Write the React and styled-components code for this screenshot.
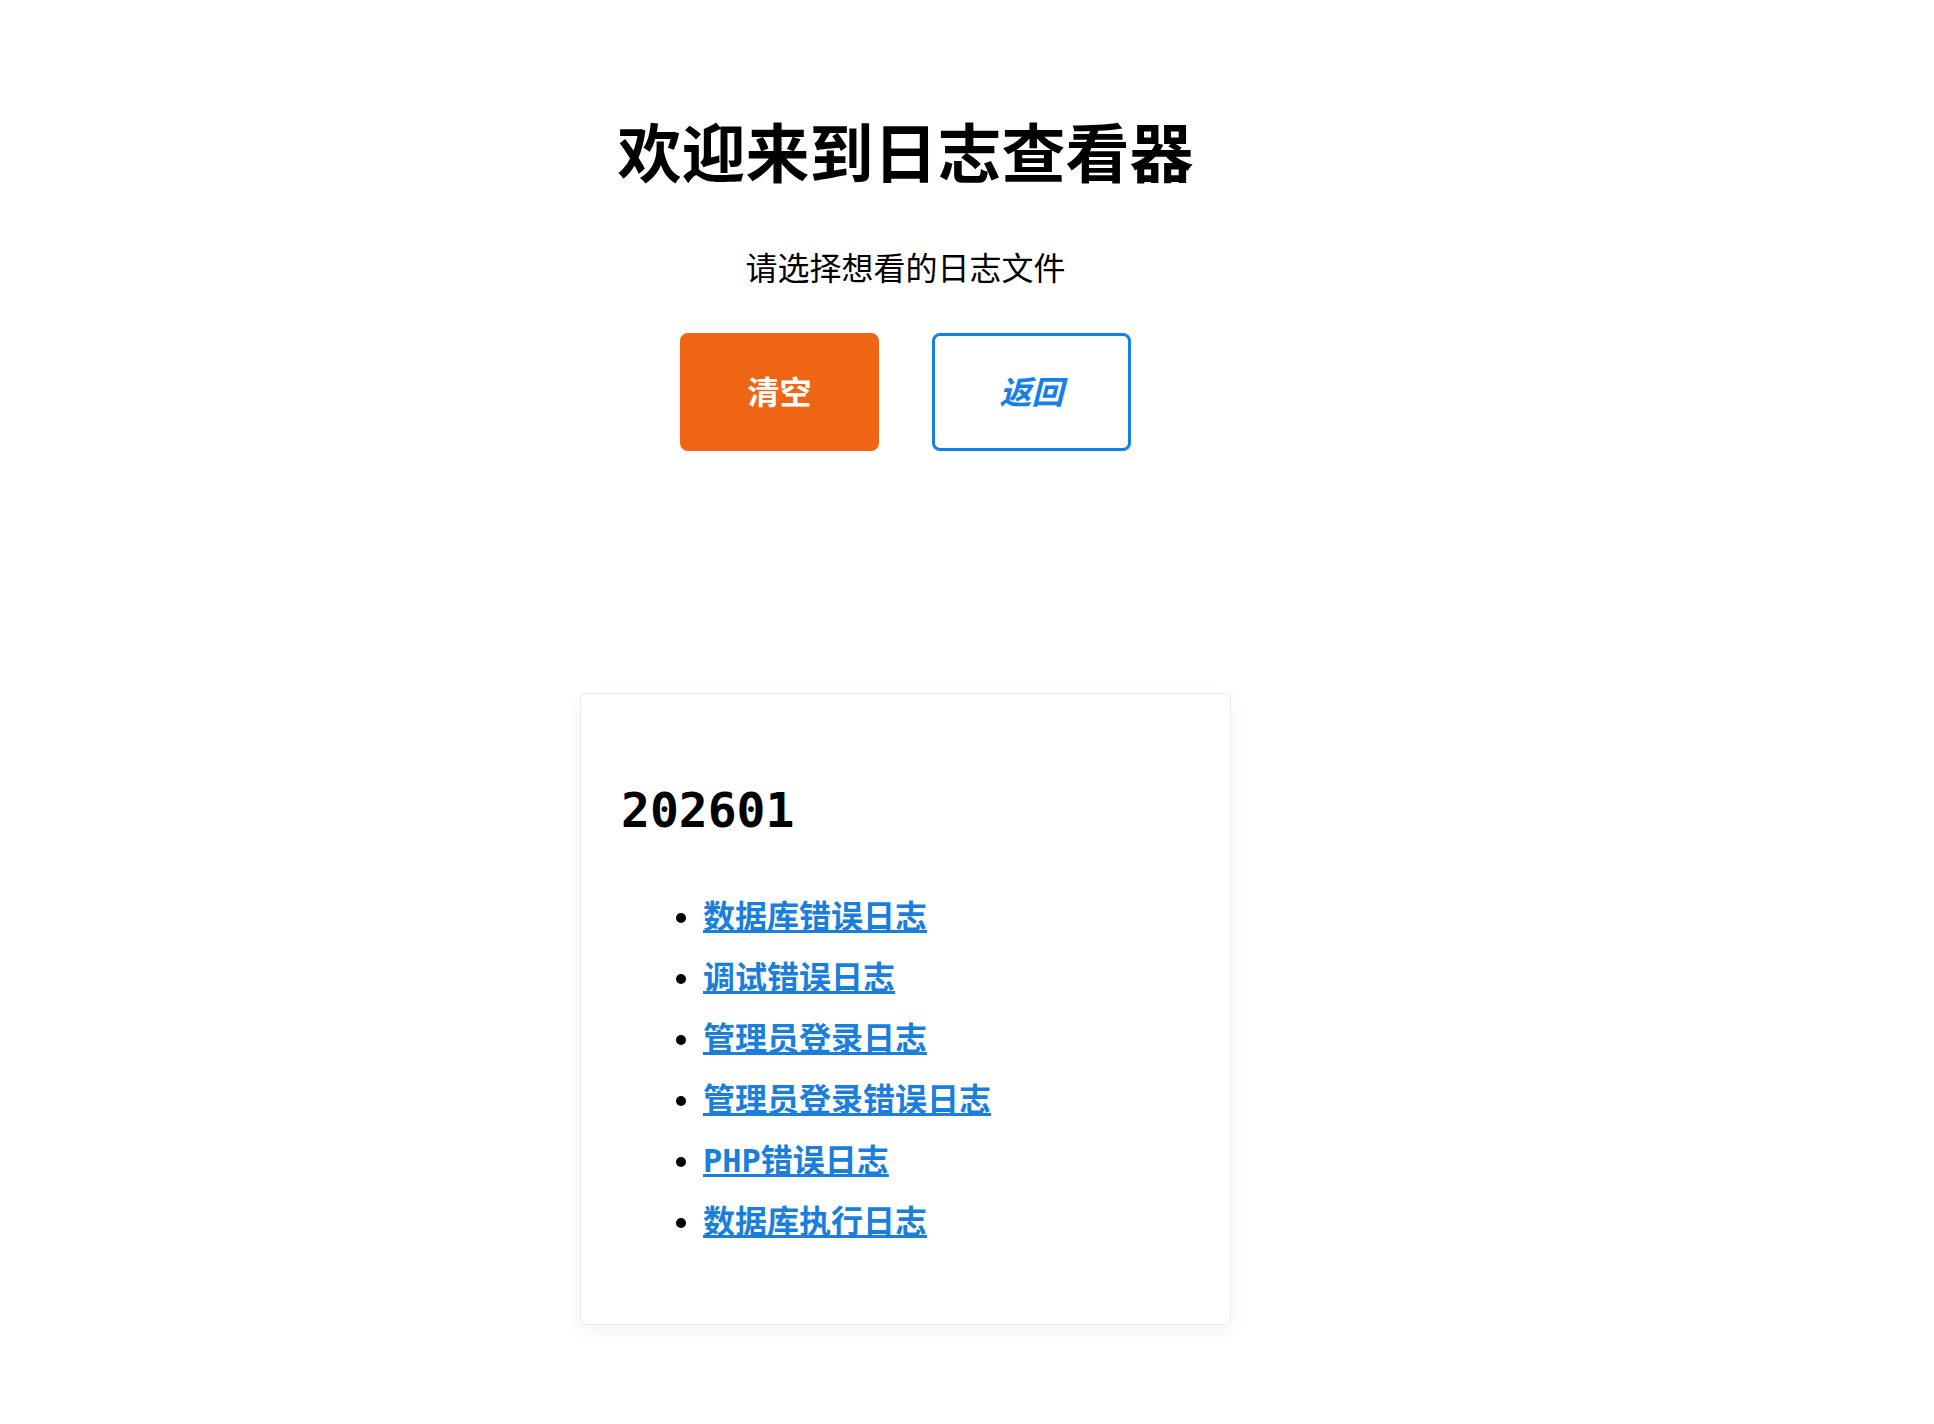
import React from 'react';
import styled, { createGlobalStyle } from 'styled-components';

const GlobalStyle = createGlobalStyle`
    body {
        margin: 0;
        background: #ffffff;
        color: #000000;
        font-family: "Noto Sans", "Noto Sans CJK SC", sans-serif;
    }
`

const Page = styled.div`
    width: 1811px;
    display: flex;
    flex-direction: column;
    align-items: center;
    padding-top: 109px;
    padding-bottom: 100px;
`
const Title = styled.h1`
    margin: 0;
    font-size: 64px;
    line-height: 80px;
    font-weight: 700;
    font-family: "Noto Sans CJK SC", sans-serif;
`
const Subtitle = styled.p`
    margin: 53px 0 0;
    font-size: 32px;
    line-height: 48px;
    font-family: "Noto Sans CJK SC", sans-serif;
`
const Actions = styled.div`
    display: flex;
    gap: 53px;
    margin-top: 43px;
`
const Button = styled.button`
    width: 199px;
    height: 118px;
    padding: 0 0 4px;
    border-radius: 8px;
    font-size: 32px;
    line-height: 40px;
    font-weight: 700;
    font-family: "Noto Sans CJK SC", sans-serif;
    cursor: pointer;
    background: ${({ outline }) => outline ? '#ffffff' : '#f06514'};
    color: ${({ outline }) => outline ? '#1580e8' : '#ffffff'};
    border: ${({ outline }) => outline ? '3px solid #1580e8' : '3px solid #f06514'};
    font-style: ${({ outline }) => outline ? 'italic' : 'normal'};
`
const Card = styled.div`
    margin-top: 242px;
    width: 651px;
    box-sizing: border-box;
    padding: 1px 40px;
    border: 1px solid #ececec;
    border-radius: 4px;
    box-shadow: rgba(0, 0, 0, 0.05) 0px 6px 18px;
    font-family: "DejaVu Sans Mono", "Noto Sans CJK SC", monospace;
`
const Month = styled.h2`
    margin: 86px 0 48px;
    font-size: 48px;
    line-height: 58px;
    font-weight: 700;
`
const LogList = styled.ul`
    margin: 32px 0 70px;
    padding-left: 82px;
    font-size: 32px;
    line-height: 61px;
    font-weight: 700;
`
const LogLink = styled.a`
    color: #1a7fdc;
    text-decoration: underline;
`

const logs = [
    '数据库错误日志',
    '调试错误日志',
    '管理员登录日志',
    '管理员登录错误日志',
    'PHP错误日志',
    '数据库执行日志',
];

export default function App() {
    return (
        <>
            <GlobalStyle />
            <Page>
                <Title>欢迎来到日志查看器</Title>
                <Subtitle>请选择想看的日志文件</Subtitle>
                <Actions>
                    <Button>清空</Button>
                    <Button outline>返回</Button>
                </Actions>
                <Card>
                    <Month>202601</Month>
                    <LogList>
                        {logs.map(name => (
                            <li key={name}>
                                <LogLink href="#">{name}</LogLink>
                            </li>
                        ))}
                    </LogList>
                </Card>
            </Page>
        </>
    )
}
